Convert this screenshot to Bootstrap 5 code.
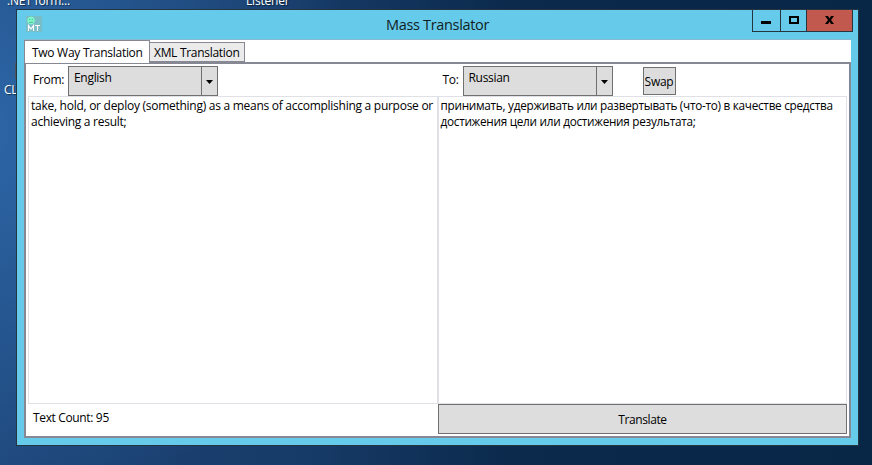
<!DOCTYPE html>
<html lang="en">
<head>
<meta charset="utf-8">
<title>Mass Translator</title>
<link href="https://cdn.jsdelivr.net/npm/bootstrap@5.3.0/dist/css/bootstrap.min.css" rel="stylesheet">
<style>
body{width:872px;height:465px;overflow:hidden;padding:9px 13px 19px 16px;font:12px/16px "Open Sans","Noto Sans",sans-serif;letter-spacing:-.27px;color:#000;
background:radial-gradient(ellipse 380px 400px at -30px 130px,#2d67a8 0,rgba(43,98,160,.7) 40%,rgba(30,70,120,0) 100%),linear-gradient(90deg,#1d4578 0,#173b68 35%,#0b2a4c 58%,#082646 100%)}
.desk-label{color:#fff;white-space:nowrap;text-shadow:1px 1px 1px #0008;letter-spacing:-.2px}
.desk-net{left:7px;top:-7px}.desk-listener{left:246px;top:-7px}.desk-cl{left:4px;top:82px}
.desk-icon{left:15px;top:63px;width:2px;height:16px;background:#4d5560}
.win{width:843px;height:437px;background:#66caea;border:1px solid #26343f;padding:0 7px 7px}
.titlebar{height:29px}
.app-icon{margin:6px 0 0 2px}
.win-title{font-size:14.5px;line-height:20px;padding-top:5px;padding-left:344px;letter-spacing:-.33px;color:#111d24}
.caption{height:22px;margin-right:-2px;border:1px solid #26343f;border-top:0}
.caption>div{border-right:1px solid #26343f}
.caption .c-close{background:#c2594f;border:0}
.client{background:#fff;border-top:1px solid #85b9cf;height:399px}
.tabs{height:22px}
.tab-on{width:126px;height:23px;border:1px solid #868893;border-bottom:0;background:#fff;z-index:1;padding:4px 0 0 7px;letter-spacing:-.28px}
.tab-off{width:96px;height:20px;margin:2px 0 0 -1px;border:1px solid #868893;background:#ebebeb;padding:2px 0 0 4px;letter-spacing:-.3px}
.pane{height:376px;border:2px solid #868893;padding:2px}
.tools{height:30px}
.lbl{padding:6px 0 0 5px}
.lbl-from{width:40px}
.lbl-to{width:25px}
.combo{width:150px;height:30px;background:#ddd;border:1px solid #707070}
.combo>span{flex:1;padding:3px 0 0 5px;letter-spacing:-.3px}
.combo>div{width:16px;border-left:1px solid #707070;padding-top:1px}
.swap{width:33px;height:28px;margin:1px 0 0 30px;background:#ddd;border:1px solid #707070;padding-top:6px}
.box{height:308px;border:1px solid #e0e0e7;padding:1px 2px;white-space:nowrap}
.dst{font-size:11.75px;letter-spacing:-.27px;padding-top:0}
.count{padding:6px 0 0 5px;letter-spacing:-.35px}
.go{width:409px;height:30px;background:#ddd;border:1px solid #707070;padding-top:1px;letter-spacing:-.4px}
</style>
<script src="https://cdn.jsdelivr.net/npm/bootstrap@5.3.0/dist/js/bootstrap.bundle.min.js"></script>
</head>
<body>
<span class="desk-label desk-net position-absolute">.NET form...</span>
<span class="desk-label desk-listener position-absolute">Listener</span>
<span class="desk-label desk-cl position-absolute">CL</span>
<span class="desk-icon position-absolute"></span>
<main class="win position-relative">
  <header class="titlebar d-flex align-items-start">
    <svg class="app-icon flex-shrink-0" width="16" height="16" viewBox="0 0 16 16"><path fill="#79bdc7" d="M0 0h16v16H0z"/><circle cx="5" cy="4.500" r="3.700" fill="#7dfac9"/><path d="M3 3.500h1.300M5.700 3.500H7M3 6.300h4" stroke="#58b79d"/><path d="M2.500 15V9.500L5 13l2.500-3.500V15M9 9.500h5M11.500 9.500V15" fill="none" stroke="#fff" stroke-width="1.100"/></svg>
    <div class="win-title flex-grow-1">Mass Translator</div>
    <div class="caption d-flex">
      <div><svg class="d-block" width="27" height="21"><path d="M8 11h10v3H8z"/></svg></div>
      <div><svg class="d-block" width="25" height="21"><path fill="none" stroke="#000" stroke-width="2" d="M9 7h8v6H9z"/></svg></div>
      <div class="c-close"><svg class="d-block" width="45" height="21"><path d="M18 6h3l1.500 2.500L24 6h3l-3 4 3 4h-3l-1.500-2.500L21 14h-3l3-4z"/></svg></div>
    </div>
  </header>
  <section class="client">
    <nav class="tabs d-flex">
      <div class="tab-on">Two Way Translation</div>
      <div class="tab-off">XML Translation</div>
    </nav>
    <div class="pane">
      <div class="tools row g-0">
        <div class="col-6 d-flex">
          <span class="lbl lbl-from">From:</span>
          <div class="combo d-flex"><span>English</span><div class="d-flex align-items-center justify-content-center"><svg width="7" height="4"><path d="M0 0h7L3.500 4z"/></svg></div></div>
        </div>
        <div class="col-6 d-flex">
          <span class="lbl lbl-to">To:</span>
          <div class="combo d-flex"><span>Russian</span><div class="d-flex align-items-center justify-content-center"><svg width="7" height="4"><path d="M0 0h7L3.500 4z"/></svg></div></div>
          <div class="swap text-center">Swap</div>
        </div>
      </div>
      <div class="row g-0">
        <div class="box col-6 src">take, hold, or deploy (something) as a means of accomplishing a purpose or<br>achieving a result;</div>
        <div class="box col-6 dst">принимать, удерживать или развертывать (что-то) в качестве средства<br>достижения цели или достижения результата;</div>
      </div>
      <div class="d-flex justify-content-between">
        <span class="count">Text Count: 95</span>
        <div class="go d-flex align-items-center justify-content-center">Translate</div>
      </div>
    </div>
  </section>
</main>
</body>
</html>
